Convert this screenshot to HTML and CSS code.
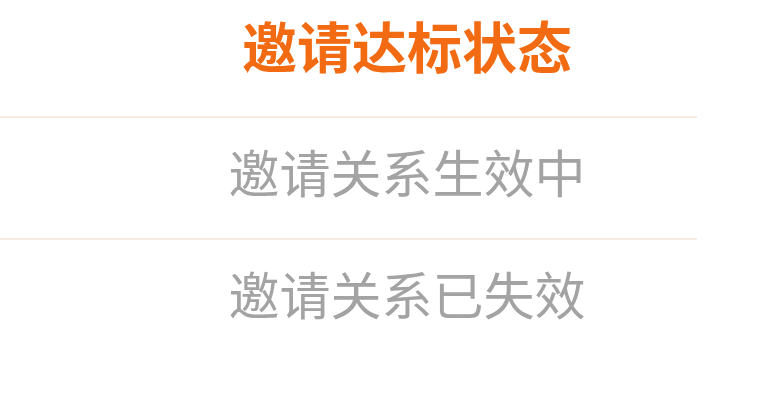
FILE: index.html
```html
<!DOCTYPE html>
<html lang="zh-CN">
<head>
<meta charset="utf-8">
<link rel="stylesheet" href="styles.css">
</head>
<body>
<div class="panel">
  <div class="title">邀请达标状态</div>
  <div class="divider"></div>
  <div class="item">邀请关系生效中</div>
  <div class="divider"></div>
  <div class="item">邀请关系已失效</div>
</div>
</body>
</html>
```
FILE: styles.css
```css
html, body {
  margin: 0;
  padding: 0;
  background: #ffffff;
  overflow: hidden;
}
.panel {
  width: 766px;
  display: flex;
  flex-direction: column;
  font-family: "Noto Sans CJK SC", "Noto Sans", sans-serif;
}
.title {
  height: 116px;
  display: flex;
  align-items: center;
  justify-content: center;
  padding: 0 0 28px 48px;
  box-sizing: border-box;
  font-size: 55px;
  font-weight: 700;
  color: #f26a12;
  line-height: 1;
}
.divider {
  width: 697px;
  height: 2px;
  background: #f6ebe1;
}
.item {
  height: 120px;
  display: flex;
  align-items: center;
  justify-content: center;
  padding: 0 0 14px 48px;
  box-sizing: border-box;
  font-size: 51px;
  color: #a3a3a3;
  line-height: 1;
}
```
